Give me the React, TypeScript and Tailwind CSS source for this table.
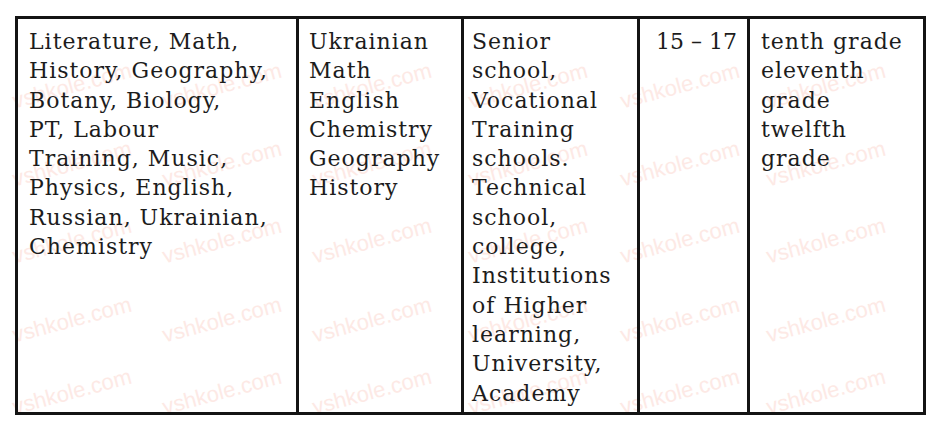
const columns: { lines: string[]; pad: string; box: string }[] = [
  {
    lines: [
      'Literature, Math,',
      'History, Geography,',
      'Botany, Biology,',
      'PT, Labour',
      'Training, Music,',
      'Physics, English,',
      'Russian, Ukrainian,',
      'Chemistry',
    ],
    pad: 'pl-[11px]',
    box: 'w-[281px] border-r-[3px]',
  },
  {
    lines: ['Ukrainian', 'Math', 'English', 'Chemistry', 'Geography', 'History'],
    pad: 'pl-[10px]',
    box: 'w-[165px] border-r-[3px]',
  },
  {
    lines: [
      'Senior',
      'school,',
      'Vocational',
      'Training',
      'schools.',
      'Technical',
      'school,',
      'college,',
      'Institutions',
      'of Higher',
      'learning,',
      'University,',
      'Academy',
    ],
    pad: 'pl-[8px]',
    box: 'w-[176px] border-r-[3px]',
  },
  {
    lines: ['15 – 17'],
    pad: 'pl-[16px] tracking-normal',
    box: 'w-[110px] border-r-[3px]',
  },
  {
    lines: ['tenth grade', 'eleventh', 'grade', 'twelfth', 'grade'],
    pad: 'pl-[11px]',
    box: 'flex-1',
  },
]

// faint scan watermark, repeated across the sheet
const markCols = [72, 222, 372, 528, 680, 826]
const markRows = [86, 164, 241, 320, 392]

function Watermarks() {
  return (
    <div className="pointer-events-none absolute inset-0 overflow-hidden">
      {markRows.map((cy) =>
        markCols.map((cx) => (
          <div
            key={`${cx}-${cy}`}
            className="absolute w-[130px] h-[26px] text-center leading-[26px] text-[22px] text-[#fde9e5] -rotate-[15deg] font-['Liberation_Sans',sans-serif]"
            style={{ left: cx - 65, top: cy - 13 }}
          >
            vshkole.com
          </div>
        ))
      )}
    </div>
  )
}

export default function App() {
  return (
    <div className="relative w-[929px] h-[431px] bg-white overflow-hidden">
      <Watermarks />
      <div className="relative ml-[15px] mt-[16px] w-[911px] h-[399px] flex border-[3px] border-[#141414] font-['DejaVu_Serif',serif] text-[22px] tracking-[1px] leading-[29.3px] text-[#1c1c1c]">
        {columns.map((col, i) => (
          <div key={i} className={`${col.box} ${col.pad} border-[#141414] pt-[8px] shrink-0`}>
            {col.lines.map((line) => (
              <div key={line + i} className="whitespace-nowrap">
                {line}
              </div>
            ))}
          </div>
        ))}
      </div>
    </div>
  )
}
